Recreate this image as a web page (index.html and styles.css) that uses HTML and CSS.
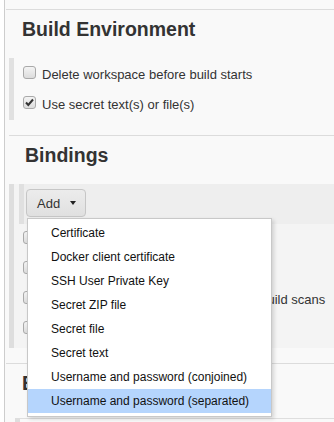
FILE: index.html
```html
<!DOCTYPE html>
<html>
<head>
<meta charset="utf-8">
<link rel="stylesheet" href="styles.css">
</head>
<body>
<div class="page">
  <div class="rule rule-top"></div>
  <h2 class="title">Build Environment</h2>
  <div class="opts">
    <label class="opt"><span class="cb"></span>Delete workspace before build starts</label>
    <label class="opt"><span class="cb on"><svg width="11" height="11" viewBox="0 0 11 11"><path d="M2 5.5 L4.3 8 L9 2.5" fill="none" stroke="#333" stroke-width="2"/></svg></span>Use secret text(s) or file(s)</label>
  </div>
  <div class="rule rule-mid"></div>
  <h2 class="title title-sub">Bindings</h2>
  <div class="block">
    <div class="addrow">
      <button class="add">Add<span class="caret"></span></button>
    </div>
    <div class="opts2">
      <label class="opt"><span class="cb"></span>Abort the build if it's stuck</label>
      <label class="opt"><span class="cb"></span>Add timestamps to the Console Output</label>
      <label class="opt"><span class="cb"></span>Inspect build log for published Gradle build scans</label>
      <label class="opt"><span class="cb"></span>With Ant</label>
    </div>
  </div>
  <div class="rule rule-low"></div>
  <h2 class="title">Build</h2>
  <div class="next"></div>

  <ul class="menu">
    <li>Certificate</li>
    <li>Docker client certificate</li>
    <li>SSH User Private Key</li>
    <li>Secret ZIP file</li>
    <li>Secret file</li>
    <li>Secret text</li>
    <li>Username and password (conjoined)</li>
    <li class="sel">Username and password (separated)</li>
  </ul>
</div>
</body>
</html>
```

FILE: styles.css
```css
html, body {
  margin: 0;
  padding: 0;
  background: #ffffff;
}
body {
  font-family: "Liberation Sans", Arial, sans-serif;
  color: #333;
}
.page {
  position: relative;
  margin-left: 4px;
  border-left: 1px solid #cdcdcd;
  background: #f9f9f9;
  height: 422px;
  overflow: hidden;
}
.rule {
  height: 1px;
  background: #dcdcdc;
}
.rule-top { margin: 9px 0 0 1px; }
.rule-mid { margin: 15px 0 0 4px; }
.rule-low { margin: 15px 0 0 1px; }
.title {
  margin: 7px 0 0;
  padding-left: 17px;
  font-size: 19.5px;
  line-height: 24px;
  font-weight: 700;
  color: #333;
}
.title-sub { padding-left: 20px; }
.opts {
  margin: 17px 0 0 4px;
  border-left: 5px solid #e1e1e1;
  padding: 1px 0 1px 9px;
}
.opt {
  display: flex;
  height: 30px;
  align-items: center;
  font-size: 13px;
  color: #333;
  white-space: nowrap;
}
.cb {
  box-sizing: border-box;
  width: 13px;
  height: 13px;
  margin: 0 6px 3px 0;
  border: 1px solid #a9a9a9;
  border-radius: 3px;
  background: linear-gradient(#f4f4f4, #dcdcdc);
  display: flex;
  align-items: center;
  justify-content: center;
  flex: none;
}
.cb svg { display: block; }
.block {
  margin: 17px 0 0 4px;
  border-left: 5px solid #dedede;
  background: #f4f4f4;
  padding-bottom: 4px;
}
.addrow {
  margin-left: 5px;
  border-left: 5px solid #e0e0e0;
  background: #eeeeee;
  padding: 5px 0 7px 2px;
}
.add {
  box-sizing: border-box;
  display: flex;
  align-items: center;
  width: 60px;
  height: 28px;
  padding: 0 0 0 10px;
  border: 1px solid #c6c6c6;
  border-radius: 4px;
  background: linear-gradient(#ececec, #e0e0e0);
  font-family: "Liberation Sans", Arial, sans-serif;
  font-size: 13px;
  color: #333;
}
.caret {
  width: 0;
  height: 0;
  margin-left: 10px;
  border-top: 4px solid #222;
  border-left: 3.5px solid transparent;
  border-right: 3.5px solid transparent;
}
.opts2 {
  padding-left: 9px;
}
.next {
  margin: 23px 0 0 10px;
  border-left: 5px solid #dedede;
  border-top: 1px solid #dedede;
  height: 10px;
}
.menu {
  position: absolute;
  left: 22px;
  top: 218px;
  width: 243px;
  margin: 0;
  padding: 2px 0 3px;
  list-style: none;
  background: #ffffff;
  border: 1px solid #c8c8c8;
  box-shadow: 2px 2px 4px rgba(0, 0, 0, 0.15);
}
.menu li {
  height: 24px;
  line-height: 24px;
  padding-left: 23px;
  font-size: 12px;
  color: #111;
  white-space: nowrap;
}
.menu li.sel {
  background: #b5d5fd;
}
```
